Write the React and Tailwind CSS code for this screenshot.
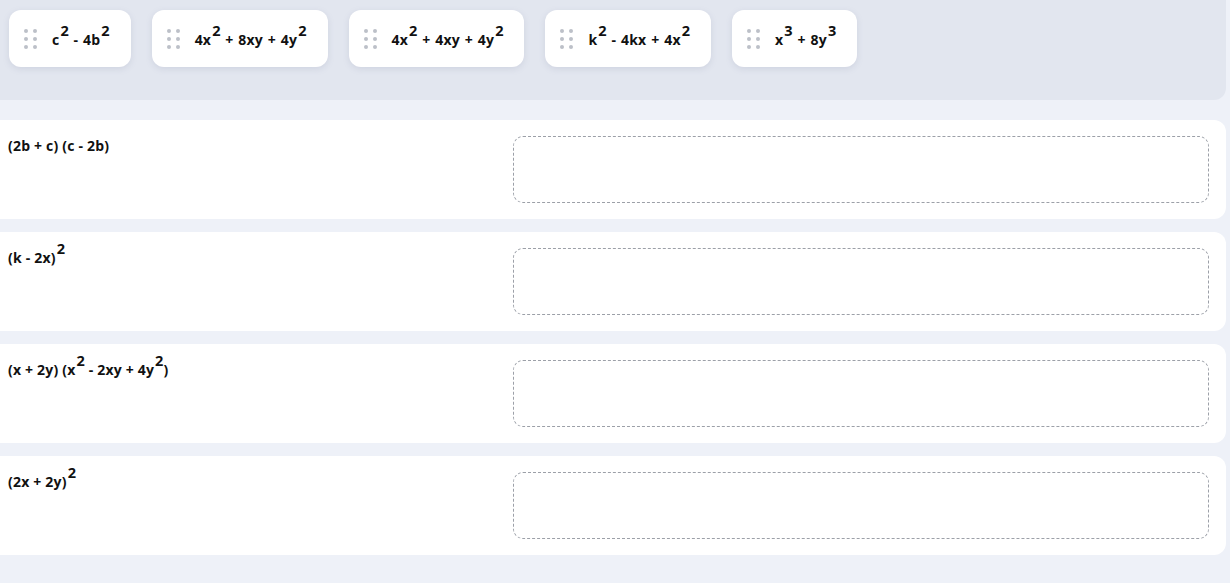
import React from "react";

const font = { fontFamily: '"Open Sans", "Noto Sans", sans-serif' };

function Sup({ children }) {
  return <sup className="text-[14.5px] font-bold top-[-0.6em] ml-[1px] tracking-normal">{children}</sup>;
}

function Handle() {
  return (
    <div className="grid grid-cols-2 gap-x-[5px] gap-y-[4px] w-[13px]">
      {Array.from({ length: 6 }).map((_, i) => (
        <span key={i} className="block w-[4px] h-[4px] rounded-full bg-[#bcc0c8]" />
      ))}
    </div>
  );
}

function Chip({ children }) {
  return (
    <div className="flex items-center h-[57px] bg-white rounded-[12px] shadow-[0_2px_6px_rgba(120,130,160,0.18)] pl-[15px] pr-[21px]">
      <Handle />
      <div className="ml-[15px] text-[14px] tracking-[0.2px] [word-spacing:1px] font-bold text-[#111] whitespace-nowrap pt-[2px]">{children}</div>
    </div>
  );
}

function Row({ children }) {
  return (
    <div className="flex w-[1226px] h-[99px] bg-white rounded-r-[12px]">
      <div className="w-[513px] pl-[8px] pt-[16px] text-[14px] tracking-[0.2px] font-bold text-[#111] leading-[20px] whitespace-nowrap">
        {children}
      </div>
      <div className="mt-[16px] w-[696px] h-[67px] border border-dashed border-[#9ca0a8] rounded-[10px]" />
    </div>
  );
}

export default function App() {
  return (
    <div className="min-h-[583px] bg-[#eef1f8]" style={font}>
      <div className="w-[1226px] bg-[#e2e6ef] rounded-br-[12px] flex gap-[21px] pl-[9px] pt-[10px] pb-[33px]">
        <Chip>c<Sup>2</Sup> - 4b<Sup>2</Sup></Chip>
        <Chip>4x<Sup>2</Sup> + 8xy + 4y<Sup>2</Sup></Chip>
        <Chip>4x<Sup>2</Sup> + 4xy + 4y<Sup>2</Sup></Chip>
        <Chip>k<Sup>2</Sup> - 4kx + 4x<Sup>2</Sup></Chip>
        <Chip>x<Sup>3</Sup> + 8y<Sup>3</Sup></Chip>
      </div>
      <div className="mt-[20px] flex flex-col gap-[13px]">
        <Row>(2b + c) (c - 2b)</Row>
        <Row>(k - 2x)<Sup>2</Sup></Row>
        <Row>(x + 2y) (x<Sup>2</Sup> - 2xy + 4y<Sup>2</Sup>)</Row>
        <Row>(2x + 2y)<Sup>2</Sup></Row>
      </div>
    </div>
  );
}
